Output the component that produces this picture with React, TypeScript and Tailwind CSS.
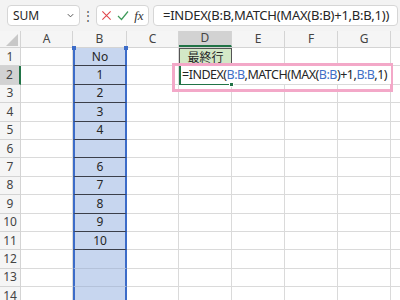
import React from 'react'

const COLS = [
  { key: 'A', w: 'w-[52px]' },
  { key: 'B', w: 'w-[54px]' },
  { key: 'C', w: 'w-[52px]' },
  { key: 'D', w: 'w-[53px]' },
  { key: 'E', w: 'w-[53px]' },
  { key: 'F', w: 'w-[53px]' },
  { key: 'G', w: 'w-[53px]' },
  { key: 'H', w: 'w-[53px]' },
]

const bValues: Record<number, string> = {
  1: 'No', 2: '1', 3: '2', 4: '3', 5: '4', 6: '', 7: '6', 8: '7', 9: '8', 10: '9', 11: '10',
}

const ROWS = Array.from({ length: 14 }, (_, i) => i + 1)

function Formula() {
  const blue = 'text-[#3f6fc6]'
  return (
    <span>
      =INDEX(<span className={blue}>B:B</span>,MATCH(MAX(<span className={blue}>B:B</span>)+1,<span className={blue}>B:B</span>,1)
    </span>
  )
}

export default function App() {
  return (
    <div className="relative h-[300px] w-[400px] overflow-hidden bg-white font-['Noto_Sans','Noto_Sans_CJK_JP',sans-serif] text-[#262626]">
      {/* formula bar */}
      <div className="flex h-[31px] items-center bg-[#f3f3f3]">
        <div className="ml-[7px] flex h-[21px] w-[73px] shrink-0 items-center justify-between rounded-[4px] border border-[#d6d6d6] bg-white pl-[5px] pr-[4px] text-[12px]">
          <span>SUM</span>
          <svg width="9" height="9" viewBox="0 0 10 10" className="text-[#555]">
            <path d="M2 3.5 L5 6.5 L8 3.5" fill="none" stroke="currentColor" strokeWidth="1.1" />
          </svg>
        </div>
        <span className="w-[16px] shrink-0 text-center text-[12px] leading-none text-[#555]">⋮</span>
        <div className="flex h-[21px] w-[53px] shrink-0 items-center justify-around rounded-[4px] border border-[#d6d6d6] bg-white px-[2px]">
          <svg width="11" height="11" viewBox="0 0 12 12">
            <path d="M1.5 1.5 L10.5 10.5 M10.5 1.5 L1.5 10.5" stroke="#e0474c" strokeWidth="1.2" />
          </svg>
          <svg width="12" height="11" viewBox="0 0 12 11">
            <path d="M1 6 L4.5 9.5 L11 1.5" fill="none" stroke="#3e9a5a" strokeWidth="1.2" />
          </svg>
          <span className="font-['Liberation_Serif',serif] text-[13px] italic leading-none text-[#333]">fx</span>
        </div>
        <div className="ml-[4px] mr-[2px] flex h-[21px] flex-1 items-center overflow-hidden whitespace-nowrap rounded-[4px] border border-[#d6d6d6] bg-white pl-[9px] text-[13px] tracking-[-0.25px]">
          =INDEX(B:B,MATCH(MAX(B:B)+1,B:B,1))
        </div>
      </div>

      {/* column headers */}
      <div className="flex h-[17px] border-b border-[#d4d4d4] bg-[#f5f5f5] text-[12px] text-[#444]">
        <div className="relative w-[21px] shrink-0 border-r border-[#d4d4d4]">
          <svg width="14" height="12" viewBox="0 0 14 12" className="absolute bottom-[1px] right-[2px]">
            <path d="M14 0 L14 12 L2 12 Z" fill="#c8c8c8" />
          </svg>
        </div>
        {COLS.map(c => (
          <div
            key={c.key}
            className={`${c.w} flex shrink-0 items-center justify-center border-r border-[#d4d4d4] ${c.key === 'D' ? 'border-b-2 border-b-[#217346] bg-[#d2d2d2]' : ''}`}
          >
            {c.key === 'H' ? '' : c.key}
          </div>
        ))}
      </div>

      {/* rows */}
      {ROWS.map(r => (
        <div key={r} className="flex h-[18.4px] text-[12px]">
          <div
            className={`flex w-[21px] shrink-0 items-center justify-center border-b border-r border-[#d4d4d4] text-[#444] ${r === 2 ? 'border-r-2 border-r-[#217346] bg-[#d2d2d2]' : 'bg-[#f5f5f5]'}`}
          >
            {r}
          </div>
          {COLS.map(c => {
            if (c.key === 'B') {
              const dark = r <= 11
              return (
                <div
                  key={c.key}
                  className={`relative ${c.w} flex shrink-0 items-center justify-center border-x-2 border-x-[#3c6cc8] bg-[#c7d6ef] ${dark ? 'border-b border-b-[#3b3f4a]' : 'border-b border-b-[#b4c2da]'}`}
                >
                  {bValues[r] ?? ''}
                  {r === 1 && (
                    <>
                      <span className="absolute left-[-3px] top-[-2px] h-[4px] w-[4px] bg-[#3c6cc8]" />
                      <span className="absolute right-[-3px] top-[-2px] h-[4px] w-[4px] bg-[#3c6cc8]" />
                    </>
                  )}
                </div>
              )
            }
            if (c.key === 'D' && r === 1) {
              return (
                <div key={c.key} className={`${c.w} flex shrink-0 items-center justify-center border border-[#555] bg-[#d3e8c7] font-['Noto_Sans_CJK_JP',sans-serif] text-[12px]`}>
                  最終行
                </div>
              )
            }
            if (c.key === 'D' && r === 2) {
              return (
                <div key={c.key} className={`relative ${c.w} shrink-0 border-2 border-[#217346]`}>
                  <div className="absolute left-0 top-[-2px] z-10 flex h-[18px] w-[210px] items-center overflow-hidden whitespace-nowrap bg-white pl-[1px] text-[12.5px] tracking-[-0.5px]">
                    <Formula />
                  </div>
                  <span className="absolute bottom-[-4px] right-[-4px] z-20 h-[5px] w-[5px] border border-white bg-[#217346]" />
                </div>
              )
            }
            return <div key={c.key} className={`${c.w} shrink-0 border-b border-r border-[#dadada]`} />
          })}
        </div>
      ))}

      {/* annotation box */}
      <div className="absolute left-[172px] top-[63px] h-[29px] w-[221px] border-[3px] border-[#f3a8c8]" />
    </div>
  )
}
